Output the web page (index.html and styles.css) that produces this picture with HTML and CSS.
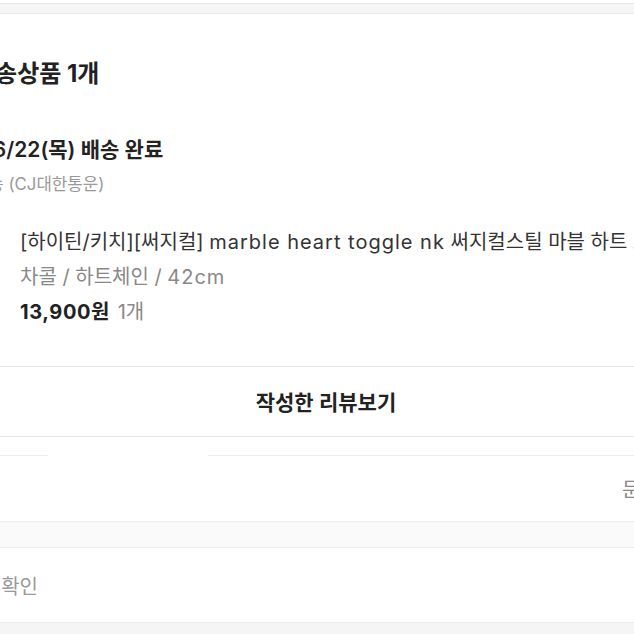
FILE: index.html
```html
<!DOCTYPE html>
<html lang="ko">
<head>
<meta charset="utf-8">
<link rel="stylesheet" href="styles.css">
</head>
<body>
<div class="page">
  <div class="topband"></div>
  <section class="card">
    <h2 class="title">배송상품 1개</h2>
    <div class="status">06/22(목) 배송 완료</div>
    <div class="carrier">일반배송 (CJ대한통운)</div>
    <div class="product">
      <div class="thumb"></div>
      <div class="info">
        <div class="name">[하이틴/키치][써지컬] <span class="en">marble heart toggle nk</span> 써지컬스틸 마블 하트 토글 목걸이</div>
        <div class="option">차콜 / 하트체인 / <span class="en">42cm</span></div>
        <div class="price"><b class="num">13,900원</b> <span class="qty">1개</span></div>
      </div>
    </div>
    <div class="review">작성한 리뷰보기</div>
  </section>
  <div class="tabs">
    <div class="tab-line short"></div>
    <div class="tab-gap"></div>
    <div class="tab-line grow"></div>
  </div>
  <section class="row-box">
    <span class="row-right">문의하기</span>
  </section>
  <div class="gap"></div>
  <section class="row-box bottom">
    <span class="row-left">배송정보 확인</span>
  </section>
  <div class="foot"></div>
</div>
</body>
</html>
```
FILE: styles.css
```css
* { box-sizing: border-box; margin: 0; padding: 0; }
html, body { width: 634px; height: 634px; overflow: hidden; background: #fff; }
body {
  font-family: Inter, "Noto Sans CJK KR", sans-serif;
  color: #222;
}
.page { width: 634px; overflow: hidden; }
.topband {
  margin-top: 3px;
  height: 11px;
  background: #f5f5f5;
  border-top: 1px solid #e6e6e6;
  border-bottom: 1px solid #ebebeb;
}
.card { display: flex; flex-direction: column; }
.title {
  margin-top: 46px;
  margin-left: -27px;
  font-size: 24px;
  font-weight: 700;
  line-height: 28px;
  white-space: nowrap;
  color: #222;
}
.status {
  margin-top: 49px;
  margin-left: -21px;
  font-size: 21px;
  font-weight: 600;
  line-height: 26px;
  white-space: nowrap;
}
.carrier {
  margin-top: 11px;
  margin-left: -58px;
  font-size: 16.8px;
  line-height: 20px;
  color: #999;
  white-space: nowrap;
}
.product {
  display: flex;
  gap: 20px;
  margin-top: 35px;
  margin-left: -80px;
}
.thumb { width: 80px; flex: none; }
.info { display: flex; flex-direction: column; gap: 9px; white-space: nowrap; }
.name { font-size: 20px; line-height: 26px; color: #333; }
.en { letter-spacing: 1px; }
.option { font-size: 20px; line-height: 26px; color: #888; }
.price { font-size: 20px; line-height: 27px; }
.price b { font-weight: 700; color: #222; }
.num { letter-spacing: 0.6px; }
.qty { color: #888; margin-left: 2px; }
.review {
  margin-top: 40px;
  height: 71px;
  border-top: 1px solid #e6e6e6;
  border-bottom: 1px solid #e6e6e6;
  display: flex;
  align-items: center;
  justify-content: center;
  padding-left: 18px;
  padding-bottom: 2px;
  font-size: 21px;
  font-weight: 600;
  color: #222;
}
.tabs { display: flex; height: 19px; }
.tab-line { border-bottom: 1px solid #ececec; }
.short { width: 48px; }
.tab-gap { width: 160px; }
.grow { flex: 1; }
.row-box {
  height: 66px;
  border-bottom: 1px solid #ececec;
  display: flex;
  align-items: center;
  white-space: nowrap;
  font-size: 20px;
  color: #888;
}
.row-right { margin-left: 622px; }
.gap { height: 26px; background: #fafafa; border-bottom: 1px solid #ebebeb; }
.bottom { height: 75px; }
.row-left { margin-left: -78px; color: #999; }
.foot { height: 20px; background: #f5f5f5; }
```
